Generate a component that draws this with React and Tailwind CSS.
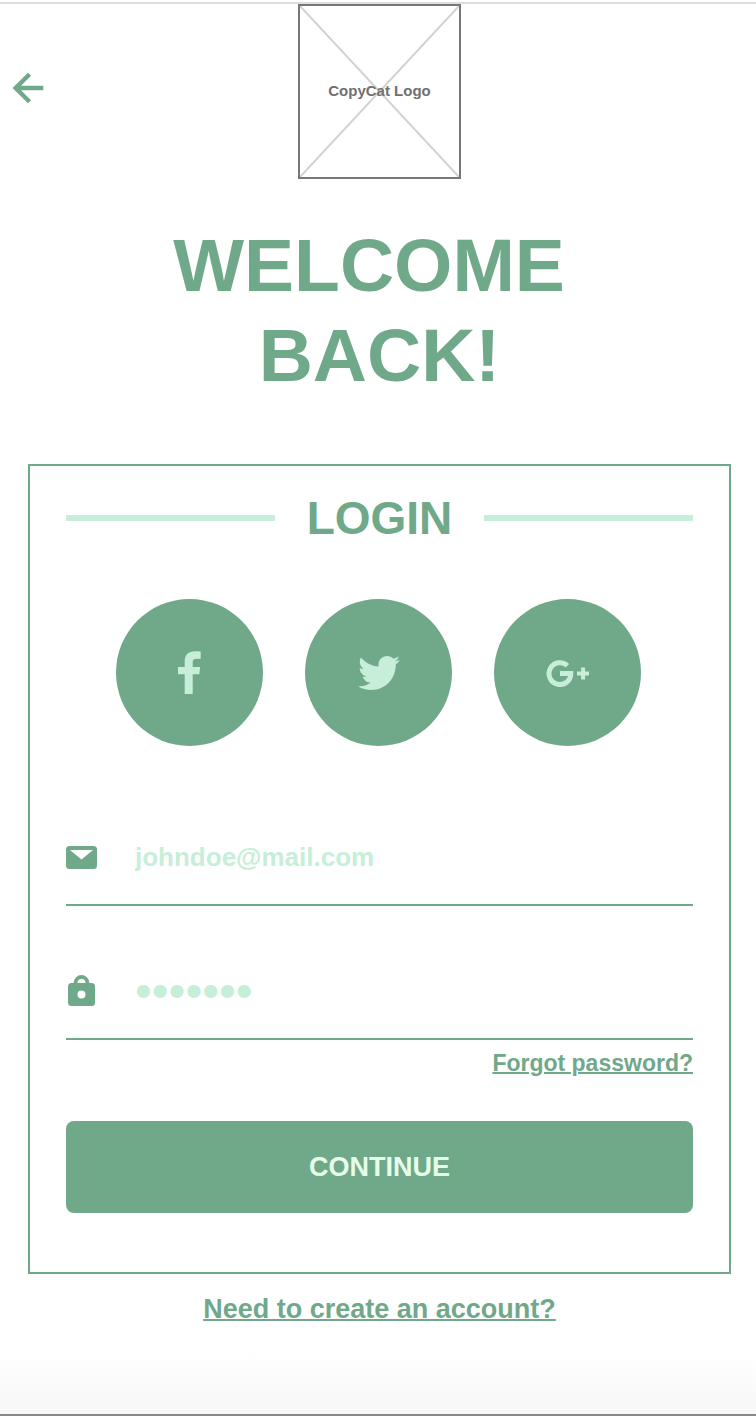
import { FaTwitter } from "react-icons/fa";

function ArrowIcon() {
  return (
    <svg viewBox="0 0 32 32" className="h-8 w-8" fill="none" stroke="currentColor" strokeWidth="4.4" aria-hidden="true">
      <path d="M17.5 2.300 3.700 16l13.800 13.700M3.700 16H31.300" />
    </svg>
  );
}

function FacebookIcon() {
  return (
    <svg viewBox="0 0 23 43" className="h-[43px] w-[23px]" fill="currentColor" aria-hidden="true">
      <path d="M6.7 43V23.3H0V16H6.7V10C6.7 4 10.5 0.3 17 0.3C19.5 0.3 21.5 0.4 22.7 0.6V7.7H18.7C15.7 7.7 14.7 8.9 14.7 11.5V16H22.2L21.3 23.3H14.7V43Z" />
    </svg>
  );
}

function GooglePlusIcon() {
  return (
    <svg viewBox="0 0 43 28" className="h-7 w-[43px]" fill="currentColor" aria-hidden="true">
      <path d="M20.9 6.700A10.900 10.900 0 1 0 24.300 14.500H13.500" transform="translate(0.500 0)" fill="none" stroke="currentColor" strokeWidth="5" />
      <path d="M31 12.500h4.100V8.400h4v4.100h4.100v4h-4.100v4.100h-4v-4.100H31z" />
    </svg>
  );
}

function MailIcon() {
  return (
    <svg viewBox="0 0 32 32" className="h-8 w-8" aria-hidden="true">
      <rect x="0" y="5" width="31" height="23" rx="3.5" fill="currentColor" />
      <path d="M4 9H27L15.5 18.5Z" fill="#fff" />
    </svg>
  );
}

function LockIcon() {
  return (
    <svg viewBox="0 0 32 32" className="h-8 w-8" aria-hidden="true">
      <path d="M9.500 9V8a6 6 0 0 1 12 0V9" fill="none" stroke="currentColor" strokeWidth="3.8" />
      <rect x="2" y="8" width="27" height="23" rx="3.5" fill="currentColor" />
      <circle cx="15.5" cy="19.5" r="4" fill="#fff" />
    </svg>
  );
}

function SocialButton({ label, children }) {
  return (
    <button type="button" aria-label={label} className="flex h-[147px] w-[147px] items-center justify-center rounded-full bg-[#70a88a] text-[#c6eed8]">
      {children}
    </button>
  );
}

export default function App() {
  return (
    <div className="flex min-h-screen flex-col bg-white font-['Liberation_Sans',Arial,sans-serif] font-bold text-[#70a88a]">
      <div className="mt-0.5 h-0.5 bg-[#dcdce2]" />

      <header className="grid grid-cols-[1fr_auto_1fr] items-center pr-[9px] pl-3">
        <a href="#back" aria-label="Back" className="justify-self-start pb-2">
          <ArrowIcon />
        </a>
        <div className="grid h-[175px] w-[163px] place-items-center border-2 border-[#777]">
          <svg viewBox="0 0 159 171" className="col-start-1 row-start-1 h-full w-full" stroke="#d2d2d2" strokeWidth="2" aria-hidden="true">
            <path d="M0 0l159 171M159 0L0 171" />
          </svg>
          <span className="z-10 col-start-1 row-start-1 text-[15px] text-[#707070]">CopyCat Logo</span>
        </div>
      </header>

      <main className="pr-[25px] pl-7">
        <h1 className="mt-[41px] text-center text-[75px] leading-[90px] whitespace-pre">
          {"WELCOME \nBACK!"}
        </h1>

        <form className="mt-16 border-2 px-9 pb-[59px]" onSubmit={(e) => e.preventDefault()}>
          <div className="flex items-center gap-8 pt-6">
            <span className="h-1.5 flex-1 bg-[#c6eed8]" />
            <h2 className="text-[46px] leading-[56px]">LOGIN</h2>
            <span className="h-1.5 flex-1 bg-[#c6eed8]" />
          </div>

          <div className="mt-[53px] flex justify-center gap-[42px] pr-0.5">
            <SocialButton label="Log in with Facebook">
              <FacebookIcon />
            </SocialButton>
            <SocialButton label="Log in with Twitter">
              <FaTwitter size={42} />
            </SocialButton>
            <SocialButton label="Log in with Google Plus">
              <GooglePlusIcon />
            </SocialButton>
          </div>

          <div className="mt-16 flex h-24 items-center gap-[37px] border-b-2">
            <label htmlFor="email" aria-label="Email">
              <MailIcon />
            </label>
            <input id="email" type="email" placeholder="johndoe@mail.com" className="h-16 min-w-0 flex-1 text-[26px] outline-none placeholder:text-[#c6eed8]" />
          </div>
          <div className="mt-[38px] flex h-24 items-center gap-[37px] border-b-2">
            <label htmlFor="password" aria-label="Password">
              <LockIcon />
            </label>
            <input id="password" type="password" placeholder="•••••••" className="h-16 min-w-0 flex-1 text-[48px] font-normal outline-none placeholder:text-[#c6eed8]" />
          </div>

          <div className="mt-[9px] text-right text-[23px] leading-7">
            <a href="#forgot" className="underline decoration-2">Forgot password?</a>
          </div>

          <button type="submit" className="mt-11 h-[92px] w-full rounded-lg bg-[#70a88a] text-[27px] text-[#e6ffea]">
            CONTINUE
          </button>
        </form>

        <p className="mt-[19px] text-center text-[27px] leading-8">
          <a href="#register" className="underline decoration-2">Need to create an account?</a>
        </p>
      </main>

      <div className="mt-auto h-16 border-b-2 border-[#888] bg-linear-to-b from-white to-[#f7f7f7]" />
    </div>
  );
}
